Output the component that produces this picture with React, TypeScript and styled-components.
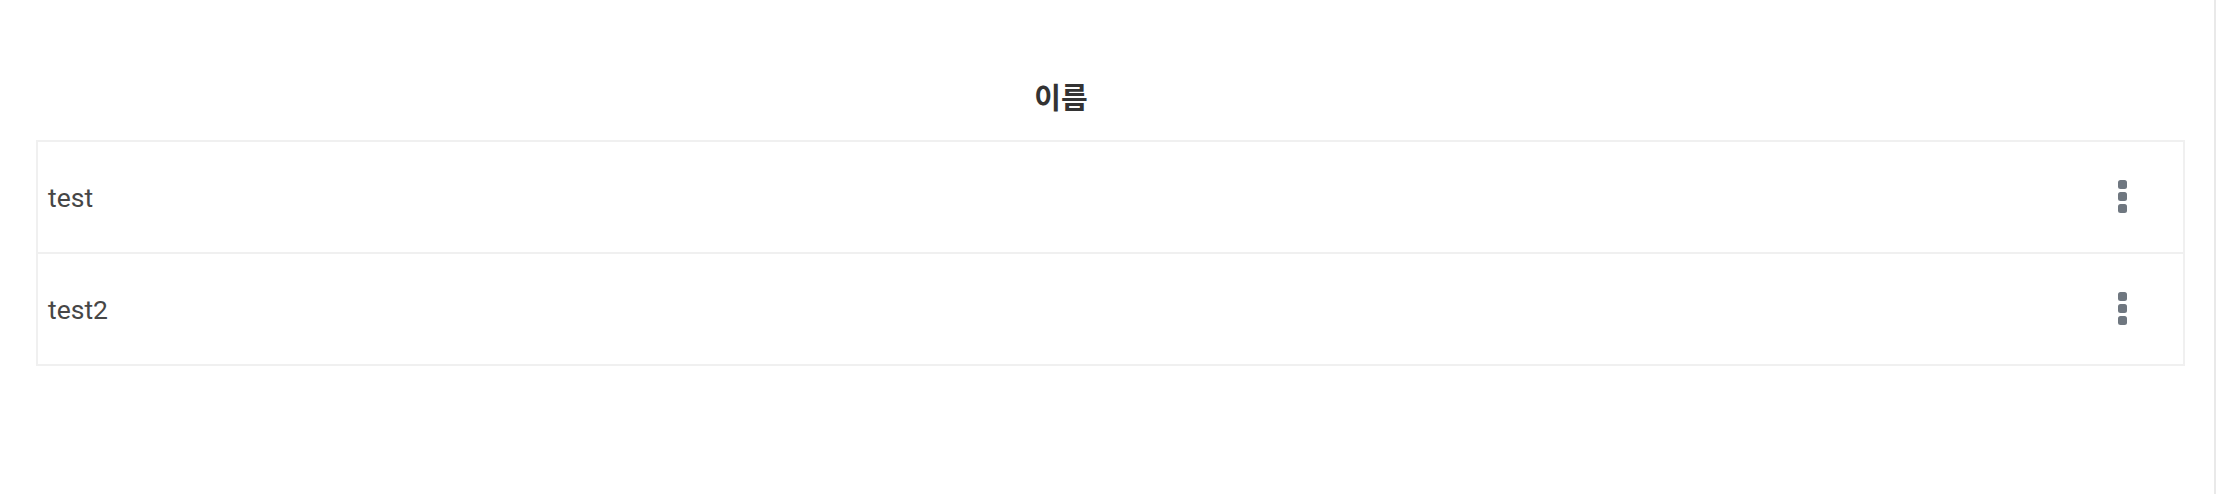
import styled, { createGlobalStyle } from "styled-components";

const GlobalStyle = createGlobalStyle`
  html, body {
    margin: 0;
    padding: 0;
    background: #fff;
  }
  body {
    font-family: Roboto, "Noto Sans CJK KR", sans-serif;
  }
`;

const Page = styled.div`
  box-sizing: border-box;
  width: 2216px;
  min-height: 100vh;
  padding: 0 29px 0 36px;
  border-right: 2px solid #e9e9e9;
`;

const HeaderRow = styled.div`
  box-sizing: border-box;
  height: 140px;
  display: grid;
  grid-template-columns: 1fr 99px;
  padding-top: 76px;
`;

const HeaderCell = styled.div`
  text-align: center;
  font-family: "Noto Sans CJK KR", Roboto, sans-serif;
  font-weight: 700;
  font-size: 29px;
  line-height: 40px;
  color: #333;
`;

const Table = styled.div`
  border: 2px solid #f0f0f0;
  display: flex;
  flex-direction: column;
`;

const Row = styled.div`
  display: grid;
  grid-template-columns: 1fr 97px;
  height: 110px;
  align-items: center;
  & + & {
    border-top: 2px solid #f0f0f0;
  }
`;

const NameCell = styled.div`
  padding-left: 10px;
  font-family: Roboto, sans-serif;
  font-size: 26.5px;
  color: #464646;
`;

const ActionCell = styled.div`
  display: flex;
  align-items: center;
  padding-left: 32px;
  padding-bottom: 2px;
`;

const MoreButton = styled.button`
  border: 0;
  background: none;
  padding: 0;
  display: flex;
  cursor: pointer;
`;

const Dots = () => (
  <svg width="9" height="33" viewBox="0 0 9 33">
    <rect x="0" y="0" width="9" height="9" rx="2.5" fill="#6f7780" />
    <rect x="0" y="12" width="9" height="9" rx="2.5" fill="#6f7780" />
    <rect x="0" y="24" width="9" height="9" rx="2.5" fill="#6f7780" />
  </svg>
);

const rows = ["test", "test2"];

export default function App() {
  return (
    <>
      <GlobalStyle />
      <Page>
        <HeaderRow>
          <HeaderCell>이름</HeaderCell>
          <div />
        </HeaderRow>
        <Table>
          {rows.map((name) => (
            <Row key={name}>
              <NameCell>{name}</NameCell>
              <ActionCell>
                <MoreButton aria-label="more">
                  <Dots />
                </MoreButton>
              </ActionCell>
            </Row>
          ))}
        </Table>
      </Page>
    </>
  );
}
